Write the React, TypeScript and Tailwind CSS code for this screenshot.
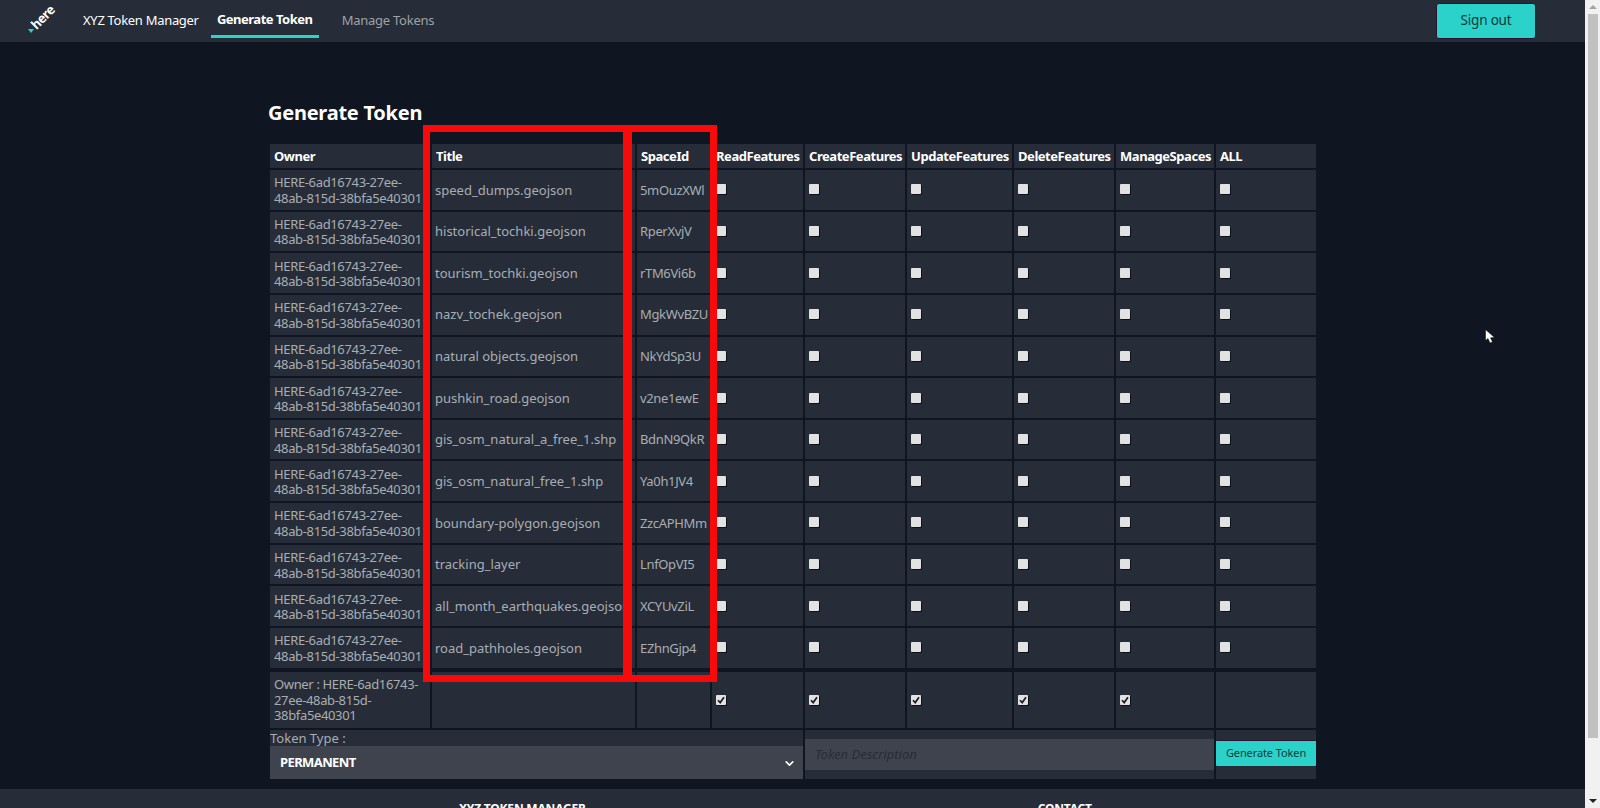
import { ChevronDown } from 'lucide-react';

const OWNER = 'HERE-6ad16743-27ee-48ab-815d-38bfa5e40301';

const spaces = [
  { title: 'speed_dumps.geojson', id: '5mOuzXWl' },
  { title: 'historical_tochki.geojson', id: 'RperXvjV' },
  { title: 'tourism_tochki.geojson', id: 'rTM6Vi6b' },
  { title: 'nazv_tochek.geojson', id: 'MgkWvBZU' },
  { title: 'natural objects.geojson', id: 'NkYdSp3U' },
  { title: 'pushkin_road.geojson', id: 'v2ne1ewE' },
  { title: 'gis_osm_natural_a_free_1.shp', id: 'BdnN9QkR' },
  { title: 'gis_osm_natural_free_1.shp', id: 'Ya0h1JV4' },
  { title: 'boundary-polygon.geojson', id: 'ZzcAPHMm' },
  { title: 'tracking_layer', id: 'LnfOpVI5' },
  { title: 'all_month_earthquakes.geojson', id: 'XCYUvZiL' },
  { title: 'road_pathholes.geojson', id: 'EZhnGjp4' },
];

const headers = ['Owner', 'Title', 'SpaceId', 'ReadFeatures', 'CreateFeatures', 'UpdateFeatures', 'DeleteFeatures', 'ManageSpaces', 'ALL'];

const Check = ({ checked = false }: { checked?: boolean }) => (
  <span className="relative block w-[10px] h-[10px] -mt-[1px]">
    <input
      type="checkbox"
      defaultChecked={checked}
      className="appearance-none block w-[10px] h-[10px] bg-[#e2e2e2] rounded-[1px] shadow-[1px_1px_0_#0c121b]"
    />
    {checked && (
      <svg viewBox="0 0 10 10" className="absolute inset-0 w-[10px] h-[10px]">
        <path d="M2 5.2 L4.2 7.6 L8 2.2" fill="none" stroke="#1c1c1c" strokeWidth="1.7" />
      </svg>
    )}
  </span>
);

const HereLogo = () => (
  <div className="relative w-[30px] h-[30px] ml-[26px]">
    <span className="absolute left-[3px] top-[2px] -rotate-45 text-[13px] leading-[18px] font-bold text-white tracking-[-0.6px]">here</span>
    <span className="absolute left-[2px] top-[23px] w-0 h-0 border-x-[3.5px] border-t-[4px] border-x-transparent border-t-[#2ad2c9]" />
  </div>
);

export default function App() {
  return (
    <div className="flex h-[808px] overflow-hidden bg-[#0f1621] text-[13px] leading-[15.5px] text-[#a9adb3] font-['Noto_Sans',sans-serif]">
      <div className="flex-1 min-w-0 relative">
        <nav className="h-[42px] bg-[#262d38] flex items-center">
          <HereLogo />
          <span className="ml-[27px] text-white text-[13px] tracking-[-0.3px]">XYZ Token Manager</span>
          <div className="ml-[12px] w-[108px] h-[38px] self-start pt-[4px] flex items-center justify-center font-bold text-white tracking-[-0.5px] border-b-[3px] border-[#2ad2c9]">Generate Token</div>
          <span className="ml-[23px] text-[#9ea2a8] tracking-[-0.25px]">Manage Tokens</span>
          <button className="ml-auto mr-[49px] w-[100px] h-[36px] bg-[#2ad2c9] border border-[#2a1330] rounded-[3px] text-[#123a3c] text-[13.5px] tracking-[-0.2px]">Sign out</button>
        </nav>

        <main className="pl-[268px]">
          <h1 className="mt-[57px] text-[20px] leading-[27px] font-bold text-white tracking-[-0.25px]">Generate Token</h1>
          <table className="mt-[16px] w-[1050px] table-fixed border-separate border-spacing-[2px] text-left">
            <colgroup>
              <col className="w-[160px]" />
              <col className="w-[203px]" />
              <col className="w-[73px]" />
              <col className="w-[91px]" />
              <col className="w-[100px]" />
              <col className="w-[105px]" />
              <col className="w-[100px]" />
              <col className="w-[98px]" />
              <col className="w-[100px]" />
            </colgroup>
            <thead>
              <tr>
                {headers.map((h) => (
                  <th key={h} className="h-[24px] pt-[1px] px-[4px] bg-[#262d38] text-white font-bold whitespace-nowrap tracking-[-0.45px]">
                    {h}
                  </th>
                ))}
              </tr>
            </thead>
            <tbody>
              {spaces.map((s) => (
                <tr key={s.id}>
                  <td className="h-[39.65px] px-[4px] pt-[2px] bg-[#262d38] whitespace-nowrap tracking-[-0.35px]">HERE-6ad16743-27ee-<br />48ab-815d-38bfa5e40301</td>
                  <td className="pl-[3px] pr-[4px] pt-[1px] bg-[#262d38] whitespace-nowrap overflow-hidden">{s.title}</td>
                  <td className="pl-[3px] pr-[2px] pt-[1px] bg-[#262d38] whitespace-nowrap tracking-[-0.35px]">{s.id}</td>
                  {[0, 1, 2, 3, 4, 5].map((i) => (
                    <td key={i} className="px-[4px] bg-[#262d38]"><Check /></td>
                  ))}
                </tr>
              ))}
              <tr>
                <td className="h-[58px] px-[4px] pt-[2px] bg-[#262d38] border-t-2 border-[#0f1621] tracking-[-0.35px]">Owner : {OWNER}</td>
                <td className="bg-[#262d38] border-t-2 border-[#0f1621]" />
                <td className="bg-[#262d38] border-t-2 border-[#0f1621]" />
                {[0, 1, 2, 3, 4].map((i) => (
                  <td key={i} className="px-[4px] pt-[2px] bg-[#262d38] border-t-2 border-[#0f1621]"><Check checked /></td>
                ))}
                <td className="bg-[#262d38] border-t-2 border-[#0f1621]" />
              </tr>
              <tr>
                <td colSpan={4} className="h-[49px] bg-[#262d38] align-top">
                  <div className="text-[13px] leading-[16px]">Token Type :</div>
                  <div className="relative">
                    <select className="appearance-none block w-full h-[33px] pl-[10px] pt-[1px] bg-[#3f434d] text-white font-bold text-[13px] tracking-[-0.6px] outline-none">
                      <option>PERMANENT</option>
                      <option>TEMPORARY</option>
                    </select>
                    <ChevronDown size={13} strokeWidth={3} className="absolute right-[7px] top-[11px] text-white pointer-events-none" />
                  </div>
                </td>
                <td colSpan={4} className="bg-[#262d38] align-top pt-[9px]">
                  <input
                    placeholder="Token Description"
                    className="block w-full h-[31px] px-[10px] bg-[#3f434d] text-[13px] italic outline-none placeholder:text-[#262d38]"
                  />
                </td>
                <td className="bg-[#262d38] align-top pt-[10px]">
                  <button className="block w-full h-[26px] bg-[#2ad2c9] border-t border-[#2a1330] text-[#123a3c] text-[11px] tracking-[-0.1px] rounded-[1px]">Generate Token</button>
                </td>
              </tr>
            </tbody>
          </table>
        </main>

        <footer className="mt-[8px] h-[40px] bg-[#262d38] flex text-white text-[12px] font-bold tracking-[-0.2px]">
          <span className="ml-[459px] mt-[12px]">XYZ TOKEN MANAGER</span>
          <span className="ml-[452px] mt-[12px]">CONTACT</span>
        </footer>

        {/* red annotation boxes drawn over the table */}
        <div className="absolute left-[423px] top-[125px] w-[207px] h-[557px] border-[7px] border-[#f80a0a] pointer-events-none" />
        <div className="absolute left-[625px] top-[125px] w-[92px] h-[557px] border-[7px] border-[#f80a0a] pointer-events-none" />

        {/* mouse cursor in the screenshot */}
        <svg viewBox="0 0 10 15" className="absolute left-[1485px] top-[329px] w-[10px] h-[15px]">
          <path d="M0.5 0.5 L0.5 11.5 L3 9.5 L5 14 L7.5 13 L5.5 8.8 L9.5 8.5 Z" fill="#fff" stroke="#000" strokeWidth="0.5" />
        </svg>
      </div>

      {/* browser scrollbar */}
      <div className="w-[15px] shrink-0 bg-[#f1f1f1] flex flex-col items-center">
        <div className="h-[14px] flex items-center justify-center">
          <span className="w-0 h-0 border-x-[4px] border-b-[4px] border-x-transparent border-b-[#a3a3a3]" />
        </div>
        <div className="w-[10px] h-[724px] ml-[1px] bg-[#c1c1c1]" />
        <div className="mt-auto h-[14px] flex items-center justify-center">
          <span className="w-0 h-0 border-x-[4px] border-t-[4px] border-x-transparent border-t-[#222222]" />
        </div>
      </div>
    </div>
  );
}
